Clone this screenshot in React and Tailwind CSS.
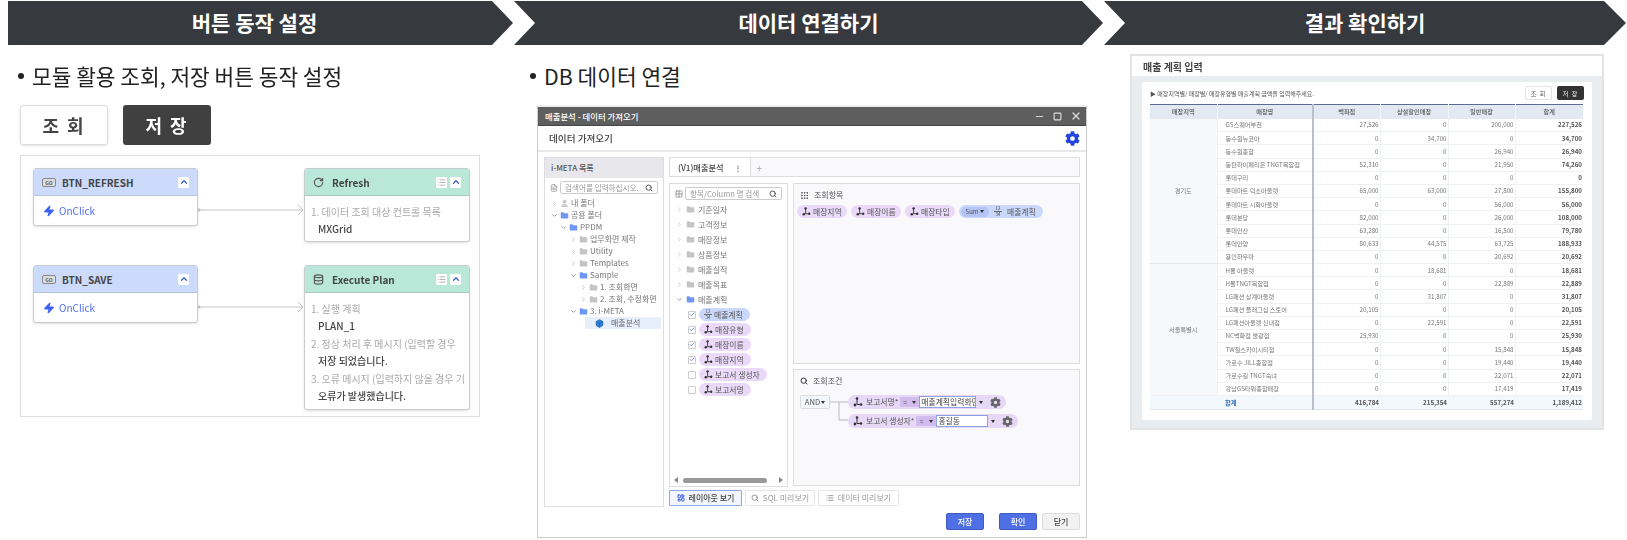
import { Box, Check, ChevronDown, ChevronRight, ChevronUp, Database, FileText, Folder, Grid2x2, Grip, LayoutDashboard, List, Minus, RotateCw, Search, Square, User, X, Zap } from 'lucide-react';
import { FaCog } from 'react-icons/fa';

const font = { fontFamily: '"Noto Sans CJK KR", "Noto Sans", sans-serif' };

// 위쪽 화살표 헤더
function StepHeader() {
  return (
    <div className="flex pl-2 pt-px text-white font-bold text-[21px]">
      <div className="w-[505px] h-[44px] pr-3 bg-[#36393e] flex items-center justify-center [clip-path:polygon(0_0,484px_0,505px_50%,484px_100%,0_100%)]">
        버튼 동작 설정
      </div>
      <div className="ml-px w-[589px] h-[44px] bg-[#36393e] flex items-center justify-center [clip-path:polygon(0_0,568px_0,589px_50%,568px_100%,0_100%,21px_50%)]">
        데이터 연결하기
      </div>
      <div className="ml-px w-[522px] h-[44px] bg-[#36393e] flex items-center justify-center [clip-path:polygon(0_0,500px_0,522px_50%,500px_100%,0_100%,21px_50%)]">
        결과 확인하기
      </div>
    </div>
  );
}

function Bullet({ children, className }) {
  return (
    <div className={`h-[60px] pt-[2px] flex items-center gap-[8px] text-[21.4px] text-[#222] ${className}`}>
      <span className="w-[6px] h-[6px] rounded-full bg-[#222]" />
      <span>{children}</span>
    </div>
  );
}

function MiniButtons({ list }) {
  return (
    <div className="ml-auto flex gap-[3px]">
      {list && (
        <span className="w-[11px] h-[11px] bg-white rounded-[1px] flex items-center justify-center">
          <List size={9} className="text-[#999]" />
        </span>
      )}
      <span className="w-[11px] h-[11px] bg-white rounded-[1px] flex items-center justify-center">
        <ChevronUp size={10} strokeWidth={3} className="text-[#3f62c9]" />
      </span>
    </div>
  );
}

function GoIcon() {
  return (
    <span className="w-[14px] h-[9px] border border-[#888] bg-[#ddd] rounded-[2px] text-[5px] leading-[7px] text-center text-[#666]">GO</span>
  );
}

function EventNode({ name }) {
  return (
    <div className="w-[165px] h-[58px] border border-[#c8ccd0] rounded-[3px] bg-white shadow-sm overflow-hidden">
      <div className="h-[27px] px-2 flex items-center gap-[6px] bg-[#ccdbfb] border-b border-[#b9c3d8] text-[10px] font-bold text-[#444]">
        <GoIcon />
        {name}
        <MiniButtons />
      </div>
      <div className="h-[29px] pl-[9px] flex items-center gap-[4px] text-[10px] text-[#4f6ff0]">
        <Zap size={12} fill="#3b5ff5" stroke="#3b5ff5" />
        OnClick
      </div>
    </div>
  );
}

function ActionNode({ icon, title, rows, bodyClass }) {
  return (
    <div className="w-[166px] border border-[#c8ccd0] rounded-[3px] bg-white shadow-sm overflow-hidden">
      <div className="h-[27px] px-2 flex items-center gap-[8px] bg-[#b9e8d8] border-b border-[#a9c9bd] text-[10px] font-bold text-[#444]">
        {icon}
        {title}
        <MiniButtons list />
      </div>
      <div className={`pl-[6px] pt-[7px] text-[10px] whitespace-nowrap overflow-hidden ${bodyClass}`}>
        {rows.map((r) => (
          <div key={r[0]} className="mb-px">
            <div className="h-[17px] leading-[17px] text-[#aaa]">{r[0]}</div>
            <div className="h-[17px] leading-[17px] pl-[7px] text-[#444] font-medium">{r[1]}</div>
          </div>
        ))}
      </div>
    </div>
  );
}

function Connector() {
  return (
    <svg width="106" height="12" className="mt-[36px]">
      <circle cx="1" cy="6" r="1.5" fill="#bbb" />
      <path d="M1 6H105M100 1l5 5-5 5" stroke="#c4c4c4" strokeWidth="1" fill="none" />
    </svg>
  );
}

function LeftColumn() {
  return (
    <div className="w-[526px] shrink-0 blur-[0.3px]">
      <Bullet className="pl-[18px]">모듈 활용 조회, 저장 버튼 동작 설정</Bullet>
      <div className="ml-[20px] flex gap-[15px] text-[18px] font-bold">
        <div className="w-[88px] h-[40px] border border-[#ddd] rounded-[3px] shadow-sm flex items-center justify-center tracking-[2px] text-[#444]">조 회</div>
        <div className="w-[88px] h-[40px] bg-[#404040] rounded-[3px] flex items-center justify-center tracking-[2px] text-white">저 장</div>
      </div>
      <div className="ml-[20px] mt-[10px] w-[460px] h-[262px] border border-[#ddd] pl-[12px] pr-[9px] pt-[12px] flex flex-col gap-[25px]">
        <div className="flex items-start h-[72px]">
          <EventNode name="BTN_REFRESH" />
          <Connector />
          <ActionNode
            icon={<RotateCw size={11} strokeWidth={2.5} className="text-[#555]" />}
            title="Refresh"
            rows={[['1. 데이터 조회 대상 컨트롤 목록', 'MXGrid']]}
            bodyClass="h-[45px]"
          />
        </div>
        <div className="flex items-start">
          <EventNode name="BTN_SAVE" />
          <Connector />
          <ActionNode
            icon={<Database size={11} strokeWidth={2.5} className="text-[#555]" />}
            title="Execute Plan"
            rows={[
              ['1. 실행 계획', 'PLAN_1'],
              ['2. 정상 처리 후 메시지 (입력할 경우', '저장 되었습니다.'],
              ['3. 오류 메시지 (입력하지 않을 경우 기', '오류가 발생했습니다.'],
            ]}
            bodyClass="h-[116px]"
          />
        </div>
      </div>
    </div>
  );
}

// 차원 아이콘
function DimIcon({ size = 9 }) {
  return (
    <svg width={size} height={size} viewBox="0 0 10 10" className="shrink-0">
      <path d="M4 1v6.5H8" stroke="#333" strokeWidth="1" fill="none" />
      <circle cx="4" cy="1.5" r="1.3" fill="#333" />
      <circle cx="2" cy="8" r="1.4" fill="#333" />
      <circle cx="8" cy="7.5" r="1.3" fill="#333" />
    </svg>
  );
}

function MeasureIcon() {
  return (
    <span className="shrink-0 w-[8px] text-[4.5px] leading-[5px] text-center text-[#444]">
      <span className="block border-b border-[#666]">12</span>
      <span className="block">34</span>
    </span>
  );
}

function Chip({ label, measure, className }) {
  return (
    <span className={`h-[13px] rounded-full pl-[5px] pr-[7px] flex items-center gap-[2px] text-[7.8px] text-[#555] whitespace-nowrap ${measure ? 'bg-[#c9d8fb]' : 'bg-[#ead9f8]'} ${className}`}>
      {measure ? <MeasureIcon /> : <DimIcon />}
      {label}
    </span>
  );
}

const treeRows = [
  { label: '내 폴더', cls: 'pl-[6px]', user: true },
  { label: '공용 폴더', cls: 'pl-[6px]', open: true },
  { label: 'PPDM', cls: 'pl-[15px]', open: true },
  { label: '업무화면 제작', cls: 'pl-[25px]' },
  { label: 'Utility', cls: 'pl-[25px]' },
  { label: 'Templates', cls: 'pl-[25px]' },
  { label: 'Sample', cls: 'pl-[25px]', open: true },
  { label: '1. 조회화면', cls: 'pl-[35px]' },
  { label: '2. 조회, 수정화면', cls: 'pl-[35px]' },
  { label: '3. i-META', cls: 'pl-[25px]', open: true },
];

function TreeRow({ row }) {
  return (
    <div className={`h-[12px] flex items-center gap-[2px] text-[8px] text-[#777] whitespace-nowrap ${row.cls}`}>
      {row.open ? <ChevronDown size={7} className="text-[#555]" /> : <ChevronRight size={7} className="text-[#999]" />}
      {row.user ? (
        <User size={9} className="text-[#bbb]" fill="#ccc" />
      ) : (
        <Folder size={9} strokeWidth={0} fill={row.open ? '#6f96f5' : '#c4c4c4'} />
      )}
      <span>{row.label}</span>
    </div>
  );
}

function SearchBox({ placeholder, className }) {
  return (
    <div className={`h-[13px] border border-[#ccc] rounded-[2px] bg-white px-[4px] flex items-center justify-between text-[7.6px] text-[#999] whitespace-nowrap overflow-hidden ${className}`}>
      <span>{placeholder}</span>
      <Search size={8} strokeWidth={3} className="text-[#555] shrink-0" />
    </div>
  );
}

function LeftTree() {
  return (
    <div className="w-[120px] h-[350px] border border-[#ddd] shrink-0">
      <div className="h-[20px] pl-[6px] flex items-center bg-[#e8e8ec] text-[8px] font-medium text-[#555]">i-META 목록</div>
      <div className="h-[19px] pl-[5px] pt-[3px] flex items-start gap-[2px]">
        <FileText size={8} className="text-[#888] mt-[3px]" />
        <SearchBox placeholder="검색어를 입력하십시오." className="w-[98px]" />
      </div>
      {treeRows.map((r) => (
        <TreeRow key={r.label} row={r} />
      ))}
      <div className="ml-[40px] w-[76px] h-[12px] flex items-center gap-[4px] pl-[10px] bg-[#e7eefc] text-[8px] text-[#666]">
        <Box size={9} strokeWidth={2} fill="#2d7fd6" className="text-[#1f6ab8]" />
        <span className="ml-[3px]">매출분석</span>
      </div>
    </div>
  );
}

const folderItems = ['기준일자', '고객정보', '매장정보', '상품정보', '매출실적', '매출목표'];
const fieldItems = [
  { label: '매출계획', checked: true, measure: true },
  { label: '매장유형', checked: true },
  { label: '매장이름', checked: true },
  { label: '매장지역', checked: true },
  { label: '보고서 생성자' },
  { label: '보고서명' },
];

function ColumnPanel() {
  return (
    <div className="w-[119px] h-[304px] border border-[#ddd] shrink-0 relative">
      <div className="h-[18px] pl-[5px] pt-[3px] flex items-start gap-[2px]">
        <Grid2x2 size={8} className="text-[#777] mt-[3px]" />
        <SearchBox placeholder="항목/Column 명 검색" className="w-[97px]" />
      </div>
      <div>
        {folderItems.map((f) => (
          <div key={f} className="h-[15px] pl-[6px] flex items-center gap-[3px] text-[8px] text-[#777]">
            <ChevronRight size={7} className="text-[#aaa]" />
            <Folder size={9} strokeWidth={0} fill="#c4c4c4" />
            {f}
          </div>
        ))}
        <div className="h-[15px] pl-[6px] flex items-center gap-[3px] text-[8px] text-[#777]">
          <ChevronDown size={7} className="text-[#555]" />
          <Folder size={9} strokeWidth={0} fill="#6f96f5" />
          매출계획
        </div>
        {fieldItems.map((f) => (
          <div key={f.label} className="h-[15px] pl-[18px] flex items-center gap-[3px]">
            <span className="w-[8px] h-[8px] border border-[#ccc] rounded-[1px] bg-white flex items-center justify-center">
              {f.checked && <Check size={7} strokeWidth={3} className="text-[#4a6fe0]" />}
            </span>
            <Chip label={f.label} measure={f.measure} />
          </div>
        ))}
      </div>
      <div className="absolute left-[4px] right-[4px] bottom-[3px] flex items-center gap-[2px]">
        <span className="w-0 h-0 border-y-[3px] border-y-transparent border-r-[4px] border-r-[#888]" />
        <span className="ml-[3px] w-[84px] h-[5px] rounded-full bg-[#999]" />
        <span className="ml-auto w-0 h-0 border-y-[3px] border-y-transparent border-l-[4px] border-l-[#888]" />
      </div>
    </div>
  );
}

function Caret() {
  return <span className="w-0 h-0 border-x-[2px] border-x-transparent border-t-[3px] border-t-[#333]" />;
}

function Condition({ label, opClass, inputClass, value }) {
  return (
    <div className="h-[14px] rounded-full bg-[#e7d8f8] pl-[5px] pr-[5px] flex items-center text-[7.8px] text-[#555] whitespace-nowrap w-max">
      <DimIcon size={10} />
      <span className="ml-[3px]">{label}</span>
      <span className={`ml-[2px] h-[10px] bg-[#d2bcee] flex items-center justify-between px-[3px] text-[7px] ${opClass}`}>
        =<Caret />
      </span>
      <span className={`h-[12px] border border-[#8fa3e0] bg-white px-px overflow-hidden text-[#444] leading-[10px] ${inputClass}`}>{value}</span>
      <span className="ml-[3px] flex"><Caret /></span>
      <FaCog size={11} className="ml-[7px] text-[#666]" />
    </div>
  );
}

function QueryPanels() {
  return (
    <div className="w-[287px] flex flex-col gap-[5px]">
      <div className="h-[181px] border border-[#ddd] bg-[#f9f9fb] px-[3px] pt-[3px]">
        <div className="h-[16px] pl-[3px] flex items-center gap-[5px] text-[8px] text-[#555]">
          <Grip size={9} className="text-[#444]" />
          조회항목
        </div>
        <div className="mt-[2px] flex gap-[4px]">
          <Chip label="매장지역" className="w-[50px]" />
          <Chip label="매장이름" className="w-[50px]" />
          <Chip label="매장타입" className="w-[50px]" />
          <span className="w-[84px] h-[13px] rounded-full bg-[#c9d8fb] pl-[2px] flex items-center gap-[5px] text-[7.8px] text-[#555]">
            <span className="w-[28px] h-[10px] rounded-full bg-[#b3c4f5] flex items-center justify-center gap-[2px] text-[6px]">
              Sum
              <Caret />
            </span>
            <MeasureIcon />
            매출계획
          </span>
        </div>
      </div>
      <div className="h-[117px] border border-[#ddd] bg-[#f9f9fb] px-[6px] pt-[4px]">
        <div className="h-[14px] flex items-center gap-[5px] text-[8px] text-[#555]">
          <Search size={8} strokeWidth={3} className="text-[#333]" />
          조회조건
        </div>
        <div className="mt-[7px] flex items-start">
          <span className="w-[30px] h-[14px] border border-[#ddd] rounded-[2px] bg-[#f4f7fb] flex items-center justify-center gap-px text-[7.6px] text-[#555]">
            AND
            <Caret />
          </span>
          <svg width="18" height="30" className="shrink-0">
            <path d="M0 7H18M9 7V25H18" stroke="#bbb" strokeWidth="1" fill="none" />
          </svg>
          <div className="flex flex-col gap-[5px]">
            <Condition label="보고서명*" opClass="w-[19px]" inputClass="w-[57px]" value="매출계획입력화면" />
            <Condition label="보고서 생성자*" opClass="w-[20px]" inputClass="w-[52px]" value="홍길동" />
          </div>
        </div>
      </div>
    </div>
  );
}

function ViewTab({ icon, label, active, className }) {
  return (
    <div className={`h-[16px] rounded-[1px] flex items-center justify-center gap-[4px] text-[8px] ${active ? 'border border-[#8ea6ee] bg-[#f4f6fd] text-[#444] font-medium' : 'border border-[#e5e5e5] text-[#999]'} ${className}`}>
      {icon}
      {label}
    </div>
  );
}

function DataWindow() {
  return (
    <div className="ml-[11px] w-[550px] h-[433px] border border-[#ccc] border-t-2 border-t-[#eee] blur-[0.3px]">
      <div className="h-[19px] pl-[7px] pr-[4px] bg-[#5e5e5e] border-b border-[#444] flex items-center text-white text-[8.4px] font-medium">
        매출분석 - 데이터 가져오기
        <div className="ml-auto flex items-center gap-[8px] text-[#ddd]">
          <Minus size={11} />
          <Square size={9} strokeWidth={3} />
          <X size={12} strokeWidth={2.5} />
        </div>
      </div>
      <div className="h-[26px] pl-[11px] pr-[6px] border-b-2 border-[#e8e8e8] flex items-center justify-between text-[9.6px] font-medium text-[#444]">
        데이터 가져오기
        <FaCog size={15} className="text-[#2446e0]" />
      </div>
      <div className="pl-[6px] pt-[5px] flex gap-[5px]">
        <LeftTree />
        <div className="w-[411px]">
          <div className="h-[20px] border border-[#ddd] bg-[#f9f9fb] flex items-center text-[8.2px] font-medium text-[#444]">
            <span className="h-full px-[8px] bg-white border-r border-[#ddd] flex items-center gap-[10px]">
              (V1)매출분석
              <span className="font-bold text-[#888]">⋮</span>
            </span>
            <span className="ml-[6px] text-[#aaa] text-[10px] font-normal">+</span>
          </div>
          <div className="mt-[6px] flex gap-[5px]">
            <ColumnPanel />
            <QueryPanels />
          </div>
          <div className="mt-[3px] flex gap-[3px]">
            <ViewTab active label="레이아웃 보기" className="w-[73px]" icon={<LayoutDashboard size={8} strokeWidth={3} className="text-[#3f62e0]" />} />
            <ViewTab label="SQL 미리보기" className="w-[70px]" icon={<Search size={8} className="text-[#666]" />} />
            <ViewTab label="데이터 미리보기" className="w-[81px]" icon={<List size={8} className="text-[#666]" />} />
          </div>
        </div>
      </div>
      <div className="mt-[6px] pr-[6px] flex justify-end text-[8px] font-medium">
        <div className="w-[38px] h-[17px] rounded-[2px] bg-[#4f6fe4] border border-[#3f5bc4] text-white flex items-center justify-center">저장</div>
        <div className="ml-[15px] w-[38px] h-[17px] rounded-[2px] bg-[#4f6fe4] border border-[#3f5bc4] text-white flex items-center justify-center">확인</div>
        <div className="ml-[5px] w-[38px] h-[17px] rounded-[2px] bg-[#f2f2f2] border border-[#ddd] text-[#444] flex items-center justify-center">닫기</div>
      </div>
    </div>
  );
}

const seoulStart = 11;
const salesRows = [
  ['GS스퀘어부천', '27,526', '0', '200,000', '227,526'],
  ['동수원뉴코아', '0', '34,700', '0', '34,700'],
  ['동수원종합', '0', '0', '26,940', '26,940'],
  ['동탄하이페리온 TNGT복합점', '52,310', '0', '21,950', '74,260'],
  ['롯데구리', '0', '0', '0', '0'],
  ['롯데마트 덕소아울렛', '65,000', '63,000', '27,800', '155,800'],
  ['롯데마트 시화아울렛', '0', '0', '56,000', '56,000'],
  ['롯데분당', '82,000', '0', '26,000', '108,000'],
  ['롯데안산', '63,280', '0', '16,500', '79,780'],
  ['롯데안양', '80,633', '44,575', '63,725', '188,933'],
  ['용인하우마', '0', '0', '20,692', '20,692'],
  ['H몰 아울렛', '0', '18,681', '0', '18,681'],
  ['H몰TNGT복합점', '0', '0', '22,889', '22,889'],
  ['LG패션 상계아울렛', '0', '31,807', '0', '31,807'],
  ['LG패션 플래그십 스토어', '20,105', '0', '0', '20,105'],
  ['LG패션아울렛 신내점', '0', '22,591', '0', '22,591'],
  ['NC백화점 불광점', '25,930', '0', '0', '25,930'],
  ['TW질스카이시티점', '0', '0', '15,848', '15,848'],
  ['가로수 JILL종합점', '0', '0', '19,440', '19,440'],
  ['가로수길 TNGT숙녀', '0', '0', '22,071', '22,071'],
  ['강남GS타워종합매장', '0', '0', '17,419', '17,419'],
];

function SalesTable() {
  return (
    <table className="w-[433px] table-fixed border-collapse text-[6.2px] text-[#777]">
      <colgroup>
        <col className="w-[67px]" />
        <col className="w-[96px]" />
        <col className="w-[67px]" />
        <col className="w-[68px]" />
        <col className="w-[67px]" />
        <col className="w-[68px]" />
      </colgroup>
      <thead>
        <tr className="h-[14px] bg-[#e3e9f2] border-t border-[#5b6c91] text-[#555] font-medium">
          <th className="font-medium border-r border-[#f2f4f8]">매장지역</th>
          <th className="font-medium border-r-2 border-[#b9c0cb]">매장명</th>
          <th className="font-medium border-r border-[#f2f4f8]">백화점</th>
          <th className="font-medium border-r border-[#f2f4f8]">상설할인매장</th>
          <th className="font-medium border-r border-[#f2f4f8]">일반매장</th>
          <th className="font-medium">합계</th>
        </tr>
      </thead>
      <tbody>
        {salesRows.map((r, i) => (
          <tr key={r[0]} className="h-[13.2px] border-b border-[#eef1f5]">
            {i === 0 && (
              <td rowSpan={seoulStart} className="text-center bg-[#f7f8fa] border-r border-[#eef1f5] border-b border-b-[#e3e7ec]">경기도</td>
            )}
            {i === seoulStart && (
              <td rowSpan={salesRows.length - seoulStart} className="text-center bg-[#f7f8fa] border-r border-[#eef1f5]">서울특별시</td>
            )}
            <td className="pl-[8px] border-r-2 border-[#b9c0cb] whitespace-nowrap">{r[0]}</td>
            <td className="text-right pr-px border-r border-[#eef1f5]">{r[1]}</td>
            <td className="text-right pr-px border-r border-[#eef1f5]">{r[2]}</td>
            <td className="text-right pr-px border-r border-[#eef1f5]">{r[3]}</td>
            <td className="text-right pr-px font-bold text-[#555]">{r[4]}</td>
          </tr>
        ))}
        <tr className="h-[14px] bg-[#f3f8fd] border-b border-[#e3e7ec] font-bold text-[#555]">
          <td />
          <td className="pl-[8px] text-[#2e6db4] border-r-2 border-[#b9c0cb]">합계</td>
          <td className="text-right pr-px">416,784</td>
          <td className="text-right pr-px">215,354</td>
          <td className="text-right pr-px">557,274</td>
          <td className="text-right pr-px">1,189,412</td>
        </tr>
      </tbody>
    </table>
  );
}

function ResultPanel() {
  return (
    <div className="mt-[9px] w-[474px] h-[376px] border-2 border-[#e3e3e3] bg-[#e9edf0] blur-[0.4px]">
      <div className="h-[20px] pl-[11px] bg-white flex items-center text-[10px] font-bold text-[#444]">매출 계획 입력</div>
      <div className="mx-[10px] mt-[6px] h-[338px] bg-white rounded-[2px] px-[8px]">
        <div className="h-[22px] flex items-center text-[6px] text-[#555]">
          ▶ 매장지역별/ 매장별/ 매장유형별 매출계획 금액을 입력해주세요.
          <div className="ml-auto flex gap-[5px] text-[6px] tracking-[1px]">
            <span className="w-[27px] h-[14px] border border-[#e3e3e3] rounded-[2px] flex items-center justify-center text-[#555]">조 회</span>
            <span className="w-[27px] h-[14px] bg-[#333] rounded-[2px] flex items-center justify-center text-white">저 장</span>
          </div>
        </div>
        <SalesTable />
      </div>
    </div>
  );
}

export default function App() {
  return (
    <div className="w-[1627px] h-[540px] overflow-hidden bg-white" style={font}>
      <StepHeader />
      <div className="flex">
        <LeftColumn />
        <div className="w-[604px] shrink-0">
          <Bullet className="pl-[4px]">DB 데이터 연결</Bullet>
          <DataWindow />
        </div>
        <ResultPanel />
      </div>
    </div>
  );
}
